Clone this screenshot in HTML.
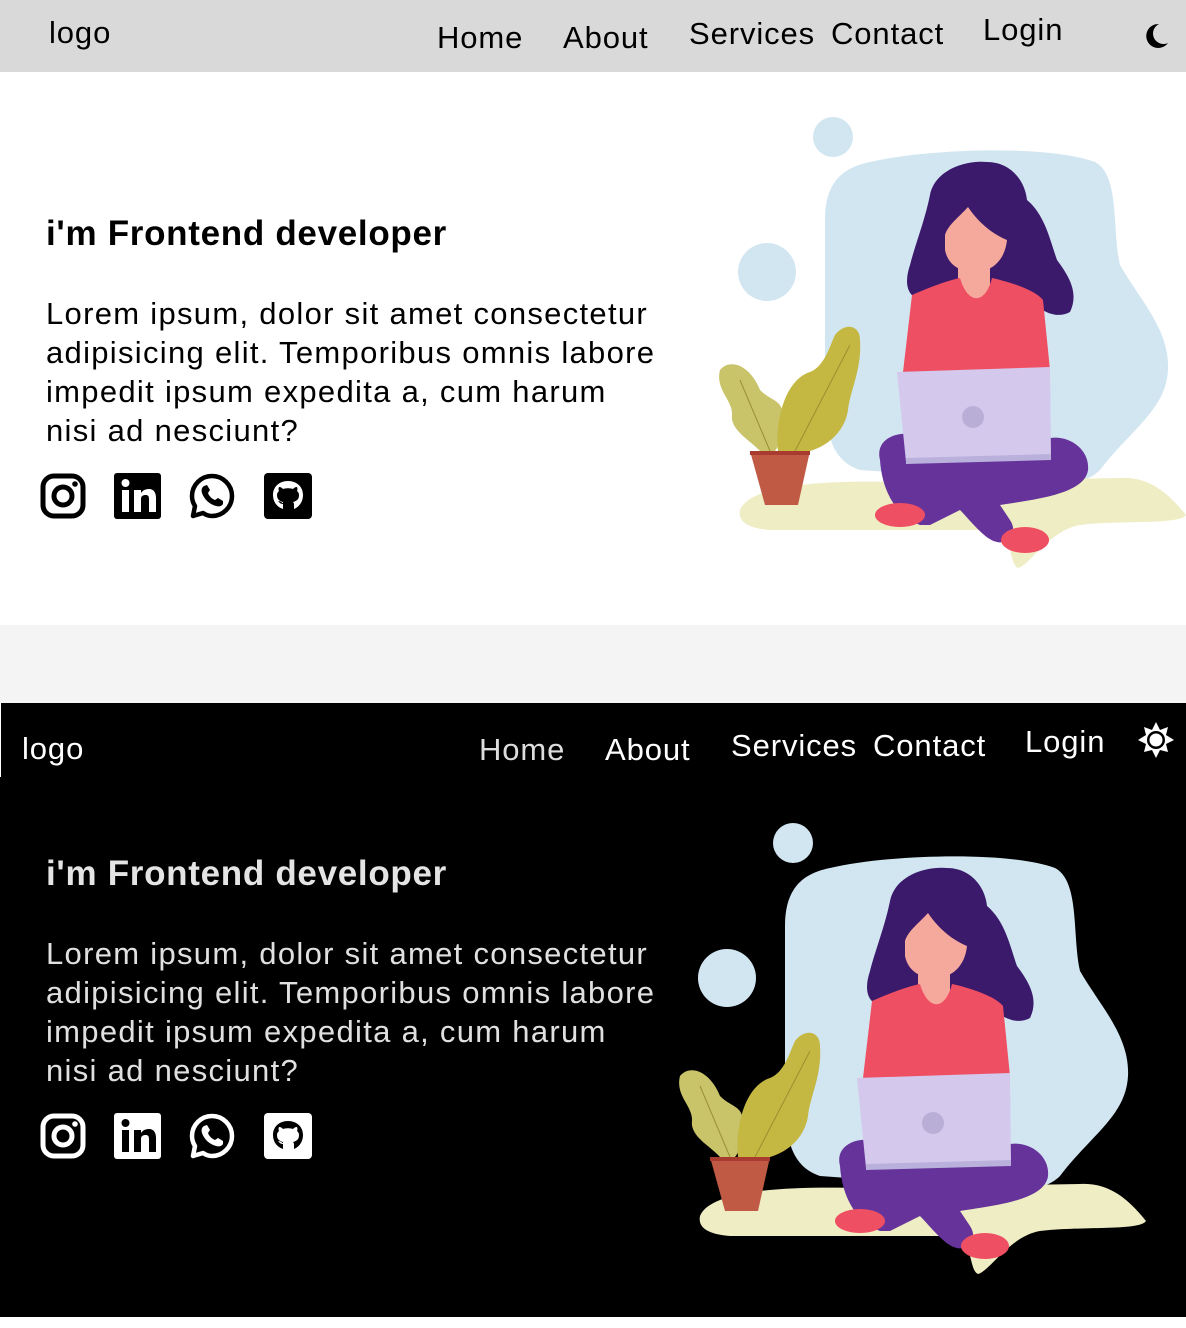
<!DOCTYPE html>
<html><head><meta charset="utf-8">
<style>
*{margin:0;padding:0;box-sizing:border-box}
body{width:1186px;height:1328px;position:relative;background:#fff;font-family:"Liberation Sans",sans-serif;overflow:hidden}
.abs{position:absolute}
.nav{font-size:31px;position:absolute;white-space:nowrap;line-height:1;letter-spacing:0.9px}
h1{position:absolute;font-size:35px;font-weight:bold;white-space:nowrap;letter-spacing:0.7px}
.p{position:absolute;font-size:31px;line-height:39px;white-space:nowrap;letter-spacing:1.3px}
</style></head><body>
<svg width="0" height="0" style="position:absolute">
<defs>
<g id="ill">
<circle cx="133" cy="37" r="20" fill="#d2e6f2"/>
<circle cx="67" cy="172" r="29" fill="#d2e6f2"/>
<path d="M170 62 C230 48,350 45,395 62 C420 75,412 130,420 165 C440 200,470 230,468 270 C466 310,430 330,400 370 C380 390,340 385,300 380 L160 370 C130 360,125 330,125 290 L125 120 C125 85,140 68,170 62Z" fill="#d2e6f2"/>
<path d="M40 410 C50 385,120 380,200 382 L420 378 C450 376,470 395,486 415 C480 425,420 420,380 425 C350 430,330 465,318 468 C310 465,312 440,300 430 L70 430 C45 428,38 420,40 410Z" fill="#efedc4"/>
<path d="M20 270 C30 258,50 265,60 290 C70 300,80 300,82 310 C85 330,80 345,75 351 L60 351 C50 340,30 330,32 315 C33 300,15 290,20 270Z" fill="#c9c36a"/>
<path d="M78 351 C75 320,85 280,110 272 C125 266,130 245,135 235 C145 222,160 225,160 240 C162 270,150 290,148 310 C145 330,130 345,110 351Z" fill="#c4b843"/>
<path d="M40 280 L70 351 M150 245 L95 351" stroke="#9a8f30" stroke-width="1" fill="none"/>
<polygon points="50,351 110,351 98,405 65,405" fill="#c05a45"/>
<rect x="50" y="351" width="60" height="4" fill="#a83a2f"/>
<path d="M230 95 C235 70,265 60,287 62 C310 62,325 80,327 100 C345 115,350 140,357 160 C372 180,378 195,370 212 C355 220,340 210,330 200 L220 200 C205 195,205 180,210 165 C215 145,225 120,230 95Z" fill="#3b1a6b"/>
<rect x="258" y="150" width="32" height="55" rx="14" fill="#f5a99d"/>
<path d="M268 107 C258 118,248 125,245 135 L245 150 C248 165,260 172,275 172 C292 172,305 160,307 140 C295 135,280 125,268 107Z" fill="#f5a99d"/>
<path d="M212 195 C235 185,250 180,260 178 C268 205,285 205,292 178 C310 182,335 190,343 200 L350 270 L203 272Z" fill="#ef4f62"/>
<path d="M180 360 C175 340,195 333,206 334 L206 362 L350 358 L350 338 C370 335,390 350,388 370 C385 395,330 400,300 405 L310 420 C318 432,310 445,297 442 C285 440,270 420,260 410 L230 425 L220 425 C195 415,182 390,180 360Z" fill="#65339a"/>
<polygon points="197,272 350,267 351,358 206,362" fill="#d4c8ec"/>
<polygon points="206,358 351,354 351,360 206,364" fill="#b9b0dc"/>
<circle cx="273" cy="317" r="11" fill="#b9afd6"/>
<ellipse cx="200" cy="415" rx="25" ry="12" fill="#ef4f62"/>
<ellipse cx="325" cy="440" rx="24" ry="13" fill="#ef4f62"/>
</g>
<g id="ig"><rect x="3" y="3" width="40" height="40" rx="11" fill="none" stroke="currentColor" stroke-width="5"/><circle cx="23" cy="23" r="9" fill="none" stroke="currentColor" stroke-width="5"/><circle cx="35" cy="11" r="2.8" fill="currentColor"/></g>
<g id="li"><rect x="0" y="0" width="47" height="46" rx="3" fill="currentColor"/><rect x="8" y="17" width="7" height="22" fill="var(--bg)"/><circle cx="11.5" cy="10" r="4" fill="var(--bg)"/><path d="M20 17 H27 V20 C29 17,32 16,35 16 C40 16,42 20,42 25 V39 H35 V26 C35 23,34 22,31.5 22 C29 22,27 23,27 26 V39 H20Z" fill="var(--bg)"/></g>
<g id="wa"><path d="M23 3 C12 3,3 12,3 23 C3 27,4 30,6 33 L4 43 L14 40 C17 42,20 43,23 43 C34 43,43 34,43 23 C43 12,34 3,23 3Z" fill="none" stroke="currentColor" stroke-width="4.5" stroke-linejoin="round"/><path d="M15 13 C13 14,12 17,13 20 C15 26,20 31,27 33 C30 34,33 33,34 31 L34 28 L29 25 L26 27 C23 26,20 23,19 20 L21 17 L18 12Z" fill="currentColor"/></g>
<g id="gh"><rect x="0" y="0" width="48" height="46" rx="4" fill="currentColor"/><path d="M24 8 C15 8,9 14,9 22 C9 29,13 34,19 36 L19 31 C16 31,15 29,14 28 C17 28,18 30,19 30 L19 29 C15 28,13 26,13 22 C13 20,14 19,15 18 C14 16,15 14,15 14 C17 14,18 15,19 16 C22 15,26 15,29 16 C30 15,31 14,33 14 C33 14,34 16,33 18 C34 19,35 20,35 22 C35 26,33 28,29 29 C30 30,30 31,30 32 L30 36 C35 34,39 29,39 22 C39 14,33 8,24 8Z" fill="var(--bg)"/></g>
</defs></svg>

<!-- LIGHT -->
<div class="abs" style="left:0;top:0;width:1186px;height:72px;background:#d9d9d9"></div>
<div class="abs" style="left:0;top:625px;width:1186px;height:78px;background:#f4f4f4"></div>
<div class="nav" style="left:49px;top:17px">logo</div>
<div class="nav" style="left:437px;top:22px">Home</div>
<div class="nav" style="left:563px;top:22px">About</div>
<div class="nav" style="left:689px;top:18px">Services</div>
<div class="nav" style="left:831px;top:18px">Contact</div>
<div class="nav" style="left:983px;top:14px">Login</div>
<svg class="abs" style="left:1142px;top:22px" width="28" height="28" viewBox="0 0 28 28"><path d="M17 2 A12 12 0 1 0 26 21 A10 10 0 0 1 17 2Z" fill="#000"/></svg>
<h1 style="left:46px;top:214px;color:#000">i'm Frontend developer</h1>
<div class="p" style="left:46px;top:294px;color:#000">Lorem ipsum, dolor sit amet consectetur<br>adipisicing elit. Temporibus omnis labore<br>impedit ipsum expedita a, cum harum<br>nisi ad nesciunt?</div>
<div style="--bg:#fff;color:#000">
<svg class="abs" style="left:40px;top:473px" width="47" height="47"><use href="#ig"/></svg>
<svg class="abs" style="left:114px;top:473px" width="48" height="47"><use href="#li"/></svg>
<svg class="abs" style="left:189px;top:473px" width="48" height="47"><use href="#wa"/></svg>
<svg class="abs" style="left:264px;top:473px" width="48" height="47"><use href="#gh"/></svg>
</div>
<svg class="abs" style="left:700px;top:100px" width="486" height="480"><use href="#ill"/></svg>

<!-- DARK -->
<div class="abs" style="left:0;top:703px;width:1186px;height:614px;background:#000"></div>
<div class="abs" style="left:0;top:703px;width:1px;height:74px;background:#fff"></div>
<div class="nav" style="left:22px;top:733px;color:#fff">logo</div>
<div class="nav" style="left:479px;top:734px;color:#ddd">Home</div>
<div class="nav" style="left:605px;top:734px;color:#fff">About</div>
<div class="nav" style="left:731px;top:730px;color:#fff">Services</div>
<div class="nav" style="left:873px;top:730px;color:#fff">Contact</div>
<div class="nav" style="left:1025px;top:726px;color:#fff">Login</div>
<svg class="abs" style="left:1137px;top:721px" width="38" height="38" viewBox="0 0 38 38"><polygon fill="#fff" points="19,1 23,9 31,6 29,14 37,19 29,23 31,31 23,29 19,37 15,29 7,31 9,23 1,19 9,14 7,6 15,9"/><circle cx="19" cy="19" r="9" fill="#000"/><circle cx="19" cy="19" r="6.5" fill="#fff"/></svg>
<h1 style="left:46px;top:854px;color:#e4e4e4">i'm Frontend developer</h1>
<div class="p" style="left:46px;top:934px;color:#e0e0e0">Lorem ipsum, dolor sit amet consectetur<br>adipisicing elit. Temporibus omnis labore<br>impedit ipsum expedita a, cum harum<br>nisi ad nesciunt?</div>
<div style="--bg:#000;color:#fff">
<svg class="abs" style="left:40px;top:1113px" width="47" height="47"><use href="#ig"/></svg>
<svg class="abs" style="left:114px;top:1113px" width="48" height="47"><use href="#li"/></svg>
<svg class="abs" style="left:189px;top:1113px" width="48" height="47"><use href="#wa"/></svg>
<svg class="abs" style="left:264px;top:1113px" width="48" height="47"><use href="#gh"/></svg>
</div>
<svg class="abs" style="left:660px;top:806px" width="486" height="480"><use href="#ill"/></svg>
</body></html>
